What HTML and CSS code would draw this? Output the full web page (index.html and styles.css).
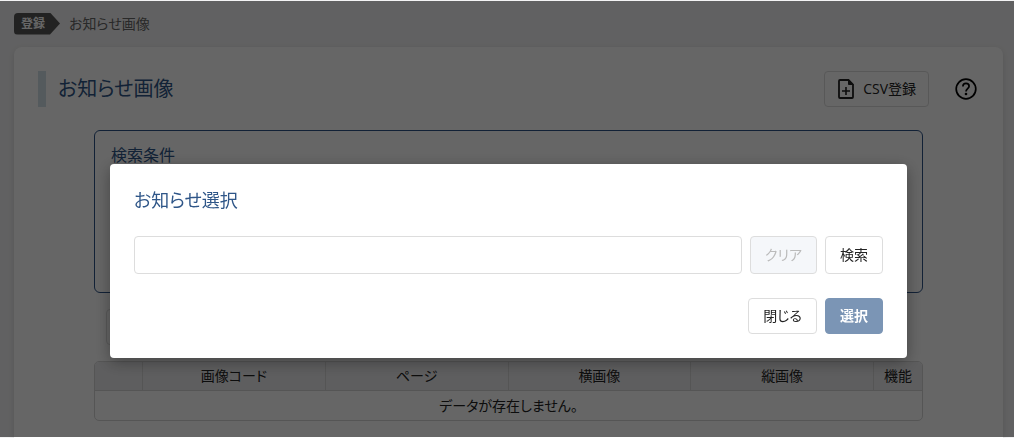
FILE: index.html
```html
<!DOCTYPE html>
<html lang="ja">
<head>
    <meta charset="UTF-8">
    <meta name="viewport" content="width=device-width, initial-scale=1.0">
    <title>お知らせ画像</title>
    <link rel="stylesheet" href="styles.css">
</head>
<body>
    <div class="page">
        <nav class="breadcrumb">
            <span class="tag">登録</span>
            <span>お知らせ画像</span>
        </nav>

        <main class="card">
            <header class="card-header">
                <h1>お知らせ画像</h1>
                <button type="button" class="btn csv-btn">
                    <svg width="18" height="22" viewBox="0 0 18 22" fill="none" stroke="currentColor" stroke-width="1.8">
                        <path d="M11.5 2H3a1 1 0 0 0-1 1v16a1 1 0 0 0 1 1h12a1 1 0 0 0 1-1V6.5z"/>
                        <path d="M11.5 2v4.5H16z" fill="currentColor" stroke-width="1"/>
                        <path d="M9 9v8M5 13h8" stroke-width="1.6"/>
                    </svg>
                    CSV登録
                </button>
                <button type="button" class="help-btn" aria-label="ヘルプ">
                    <svg width="22" height="22" viewBox="0 0 22 22" fill="none" stroke="currentColor" stroke-width="1.7">
                        <circle cx="11" cy="11" r="9.8"/>
                        <path d="M7.9 8.4c0-1.9 1.4-3 3.1-3s3.1 1.1 3.1 2.8c0 2.3-3.1 2.6-3.1 5.2"/>
                        <circle cx="11" cy="16" r="1.3" fill="currentColor" stroke="none"/>
                    </svg>
                </button>
            </header>

            <div class="content">
                <section class="conditions">
                    <h2>検索条件</h2>
                </section>
                <div class="toolbar">
                    <button type="button" class="btn">検索</button>
                </div>
                <table>
                    <thead>
                        <tr>
                            <th class="narrow"></th>
                            <th>画像コード</th>
                            <th>ページ</th>
                            <th>横画像</th>
                            <th>縦画像</th>
                            <th class="narrow">機能</th>
                        </tr>
                    </thead>
                    <tbody>
                        <tr>
                            <td colspan="6">データが存在しません。</td>
                        </tr>
                    </tbody>
                </table>
            </div>
        </main>
    </div>

    <div class="overlay">
        <form class="modal" role="dialog" aria-labelledby="modalTitle">
            <h2 id="modalTitle">お知らせ選択</h2>
            <div class="search-row">
                <input type="text" aria-labelledby="modalTitle">
                <button type="button" class="btn" disabled>クリア</button>
                <button type="button" class="btn">検索</button>
            </div>
            <div class="action-row">
                <button type="button" class="btn">閉じる</button>
                <button type="button" class="btn primary">選択</button>
            </div>
        </form>
    </div>
</body>
</html>
```
FILE: styles.css
```css
* {
    box-sizing: border-box;
}

body {
    margin: 0;
    height: 100vh;
    overflow: hidden;
    background: #f3f3f4;
    color: #222;
    font-family: "Open Sans", "Noto Sans CJK JP", sans-serif;
    font-size: 14px;
    line-height: 20px;
    font-feature-settings: "palt";
}

h1, h2 {
    margin: 0;
    font-weight: normal;
    color: #2f5688;
}

.page {
    display: flex;
    flex-direction: column;
    height: 100%;
    padding: 12px 11px 0 14px;
}

.breadcrumb {
    display: flex;
    align-items: center;
    gap: 9px;
    height: 23px;
    margin-bottom: 12px;
    color: #666;
}

.tag {
    padding: 1px 15px 1px 7px;
    border-radius: 4px;
    background: #555;
    color: #fff;
    font-size: 12px;
    font-weight: bold;
    clip-path: polygon(0 0, 36px 0, 100% 50%, 36px 100%, 0 100%);
}

.card {
    flex: 1;
    padding: 24px 24px 0;
    border-radius: 8px 8px 0 0;
    background: #fff;
    box-shadow: 0 2px 6px rgba(0, 0, 0, 0.12);
}

.card-header {
    display: flex;
    align-items: center;
    margin-bottom: 23px;
    padding-right: 2px;
}

.card-header h1 {
    flex: 1;
    padding-left: 12px;
    border-left: 8px solid #d3e0e8;
    font-size: 20px;
    line-height: 36px;
}

.btn {
    display: inline-flex;
    align-items: center;
    justify-content: center;
    height: 36px;
    padding: 0 14px;
    border: 1px solid #ddd;
    border-radius: 4px;
    background: #fff;
    color: #222;
    font: inherit;
    font-feature-settings: inherit;
    cursor: pointer;
}

.btn:disabled {
    background: #f5f7fa;
    color: #bbb;
    cursor: default;
}

.btn.primary {
    border-color: #7b95b5;
    background: #7b95b5;
    color: #fff;
    font-weight: bold;
}

.csv-btn {
    gap: 8px;
    padding: 0 12px;
}

.help-btn {
    display: flex;
    margin-left: 26px;
    padding: 0;
    border: none;
    background: none;
    color: #000;
    cursor: pointer;
}

.content {
    padding: 0 56px;
}

.conditions {
    height: 163px;
    padding: 12px 16px;
    border: 1px solid #2d5387;
    border-radius: 6px;
}

.conditions h2 {
    font-size: 16px;
    line-height: 24px;
}

.toolbar {
    padding: 16px 12px;
}

table {
    width: 100%;
    table-layout: fixed;
    border: 1px solid #d5d5d5;
    border-radius: 5px;
    border-spacing: 0;
    overflow: hidden;
}

th, td {
    height: 29px;
    padding: 0;
    font-weight: normal;
    text-align: center;
}

th {
    border-right: 1px solid #d5d5d5;
    border-bottom: 1px solid #d5d5d5;
    background: #ebebed;
}

th:last-child {
    border-right: none;
}

.narrow {
    width: 48px;
}

.overlay {
    position: fixed;
    inset: 1px 0;
    display: flex;
    align-items: flex-start;
    justify-content: center;
    padding: 163px 107px 0 110px;
    background: rgba(0, 0, 0, 0.6);
}

.modal {
    flex: 1;
    padding: 24px;
    border-radius: 4px;
    background: #fff;
    box-shadow: 0 4px 16px rgba(0, 0, 0, 0.35);
}

.modal h2 {
    margin-bottom: 24px;
    font-size: 18px;
    line-height: 24px;
}

.search-row, .action-row {
    display: flex;
    gap: 8px;
}

.search-row {
    margin-bottom: 24px;
}

.search-row input {
    flex: 1;
    min-width: 0;
    padding: 8px;
    border: 1px solid #ddd;
    border-radius: 4px;
    font: inherit;
}

.search-row .btn {
    height: 38px;
}

.action-row {
    justify-content: flex-end;
}
```
